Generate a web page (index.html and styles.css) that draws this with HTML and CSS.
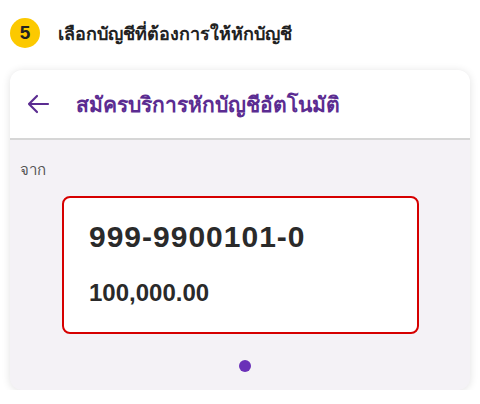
FILE: index.html
```html
<!DOCTYPE html>
<html lang="th">
<head>
  <meta charset="UTF-8" />
  <title>เลือกบัญชี</title>
  <link rel="stylesheet" href="styles.css">
</head>
<body>

<div class="step">
  <span class="badge">5</span>
  <span class="step-title">เลือกบัญชีที่ต้องการให้หักบัญชี</span>
</div>

<div class="phone">
  <div class="header">
    <svg class="back" width="24" height="20" viewBox="0 0 24 20">
      <path d="M22 10H3M11 2L3 10l8 8" fill="none" stroke="#5b2c91" stroke-width="2.2" stroke-linecap="round" stroke-linejoin="round"/>
    </svg>
    <h1>สมัครบริการหักบัญชีอัตโนมัติ</h1>
  </div>

  <div class="content">
    <div class="label">จาก</div>
    <div class="account">
      <div class="acc-no">999-9900101-0</div>
      <div class="acc-amount">100,000.00</div>
    </div>
    <div class="dots"><span class="dot"></span></div>
  </div>
</div>

</body>
</html>
```

FILE: styles.css
```css
html, body {
  margin: 0;
  padding: 0;
  background: #fff;
  font-family: "Noto Sans", "Liberation Sans", sans-serif;
  color: #222;
}
.step {
  display: flex;
  align-items: center;
  gap: 18px;
  padding: 18px 10px 0;
  height: 30px;
}
.badge {
  width: 30px;
  height: 30px;
  border-radius: 50%;
  background: #fcc900;
  color: #222;
  font: bold 19px/30px "Liberation Sans", sans-serif;
  text-align: center;
}
.step-title {
  font-size: 18px;
  font-weight: bold;
  color: #222;
}
.phone {
  margin: 22px 10px 0;
  border-radius: 12px;
  overflow: hidden;
  background: #f4f2f6;
  box-shadow: 0 1px 8px rgba(0, 0, 0, 0.12);
}
.header {
  height: 68px;
  background: #fff;
  border-bottom: 2px solid #d6d6d6;
  display: flex;
  align-items: center;
  gap: 26px;
  padding-left: 16px;
}
.back {
  display: block;
}
.header h1 {
  margin: 0;
  font-size: 21px;
  font-weight: bold;
  color: #5b2c91;
}
.content {
  padding: 18px 0 18px;
}
.label {
  padding-left: 10px;
  font-size: 15px;
  line-height: 22px;
  color: #555;
}
.account {
  margin: 16px 51px 0 52px;
  background: #fff;
  border: 2px solid #d60000;
  border-radius: 8px;
  padding: 21px 25px 25px;
  font-family: "Liberation Sans", sans-serif;
  font-weight: bold;
  color: #2a2a2a;
}
.acc-no {
  font-size: 30px;
  line-height: 36px;
  letter-spacing: 1px;
}
.acc-amount {
  margin-top: 24px;
  font-size: 24px;
  line-height: 28px;
}
.dots {
  display: flex;
  justify-content: center;
  margin-top: 26px;
  padding-left: 10px;
}
.dot {
  width: 12px;
  height: 12px;
  border-radius: 50%;
  background: #6a30b8;
}
```
